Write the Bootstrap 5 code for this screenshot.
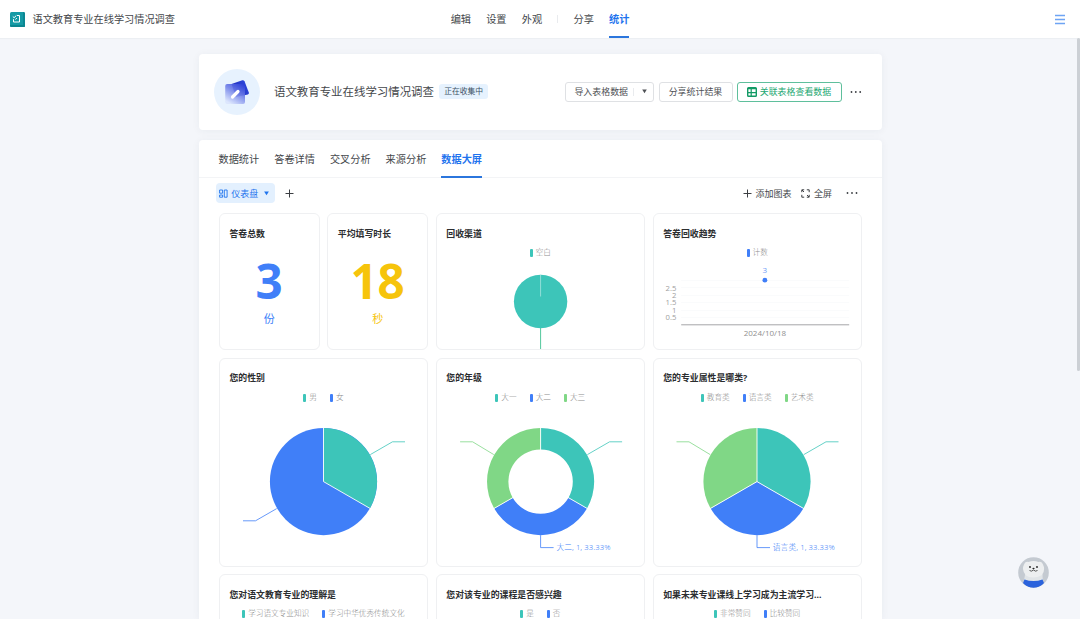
<!DOCTYPE html>
<html lang="zh-CN">
<head>
<meta charset="utf-8">
<meta name="viewport" content="width=device-width, initial-scale=1">
<title>语文教育专业在线学习情况调查</title>
<link href="https://cdn.jsdelivr.net/npm/bootstrap@5.3.0/dist/css/bootstrap.min.css" rel="stylesheet">
<style>
html,body{height:100%}
body{background:#f4f6fa;color:#44474b;font-family:"Noto Sans","Noto Sans CJK SC",sans-serif;font-size:10.18px;line-height:1;overflow:hidden}
svg{display:block;flex:none}
.topbar{height:38.4px;flex:none;padding:0 15px 0 10px;background:#fff;box-shadow:0 1px 1px #eceff3}
.topbar .side{flex:1 1 0}
.tabs{gap:15.2px}
.tab-item{height:100%;display:flex;align-items:center;white-space:nowrap;border-bottom:2px solid transparent;padding-top:2px}
.tab-item.on{color:#1f74ee;font-weight:700;border-color:#2b76dd}
.sep{width:1px;height:8px;background:#e9ebee}
.page-col{padding:15.6px 198px 0 198.5px;overflow:hidden;flex:1 1 0;min-height:0}
.panel{background:#fff;border-radius:4px;box-shadow:0 1px 8px rgba(40,50,70,.055)}
.head{height:76px;flex:none;padding:0 20px 0 15.5px}
.avatar-c{width:46px;height:46px;border-radius:50%;background:#e7f2fe}
.form-name{font-size:11.43px;margin-left:14px;margin-right:5.5px}
.state{font-size:7.8px;background:#e6f2fe;color:#3d5266;border-radius:3px;height:15px;width:48.5px}
.obtn{height:20.6px;border:1px solid #dfe1e4;border-radius:3px;font-size:8.95px;color:#4e5155;white-space:nowrap;display:flex;align-items:center;justify-content:center}
.obtn.green{border-color:#5fbf9c;color:#1da772}
.main-tabs{height:38.4px;flex:none;padding-left:20px;border-bottom:1px solid #f3f4f6;gap:15px}
.main-tabs .tab-item{height:38.4px}
.tools{height:35px;flex:none;padding:0 24px 5px 17.5px;font-size:9px}
.pill{width:59px;height:20px;border-radius:4px;background:#e3f0fe;color:#1f74ee;padding-left:3px;gap:3.2px}
.board{display:grid;grid-template-columns:repeat(6,100.8px);grid-template-rows:136.8px 208.7px 208.7px;gap:7.65px;padding-left:20.3px}
.tile{border:1px solid #eff0f2;border-radius:6px;overflow:hidden;background:#fff;display:flex;flex-direction:column}
.tile.w2{grid-column:span 2}
.tile h2{font-size:8.9px;font-weight:700;line-height:12px;margin:13.5px 0 0 9.6px;color:#2c2e30;white-space:nowrap}
.legend-row{display:flex;justify-content:center;gap:13px;margin-top:7.4px;height:12px;flex:none;font-size:7.65px;color:#8c8c8c;align-items:center;white-space:nowrap}
.legend-row span{display:flex;align-items:center;font-weight:300}
.legend-row i{width:3px;height:8px;border-radius:1px;margin-right:3px;background:#3dc5b9}
.legend-row .b{background:#407ff8}
.legend-row .g{background:#80d786}
.chart{width:208px;margin-left:-.6px;margin-top:.5px}
.chart text{font-size:7.7px;font-weight:300}
.chart .num{font-family:"Open Sans","Noto Sans",sans-serif;font-weight:400}
.big{font-size:47.5px;font-weight:700;line-height:48px;text-align:center;margin-top:17.2px}
.unit{font-size:11px;line-height:14px;text-align:center;margin-top:6.8px}
.scroll-thumb{position:absolute;right:0;top:38px;width:3px;height:333px;background:#ccd0d5;border-radius:2px}
.helper{position:absolute;left:1018px;top:557px}
</style>
</head>
<body class="d-flex flex-column">
<header class="topbar d-flex align-items-center">
  <div class="side d-flex align-items-center">
    <svg width="15" height="15" viewBox="0 0 15 15"><rect width="15" height="15" rx="1.5" fill="#159aa5"/><path d="M13 0h.5A1.500 1.500 0 0 1 15 1.500V13.500A1.500 1.500 0 0 1 13.500 15H13z" fill="#0b8793"/><path d="M0 13h15v.5A1.500 1.500 0 0 1 13.500 15h-12A1.500 1.500 0 0 1 0 13.500z" fill="#0c8690"/><path d="M7 3.500H9.500v6.500H3.500V7.200M2.800 4.500l1.300 1.200 2.200-2.200M5.500 7.500l1.300-1.500" fill="none" stroke="#fff" stroke-width="1"/></svg>
    <span style="margin-left:7.500px">语文教育专业在线学习情况调查</span>
  </div>
  <nav class="tabs d-flex align-items-center h-100" style="margin:0 -2.500px 0 2.500px">
    <span class="tab-item">编辑</span><span class="tab-item">设置</span><span class="tab-item">外观</span>
    <span class="sep"></span>
    <span class="tab-item">分享</span><span class="tab-item on">统计</span>
  </nav>
  <div class="side d-flex justify-content-end">
    <svg width="10" height="11" viewBox="0 0 10 11"><path d="M0 1.500h10M0 5.500h10M0 9.500h10" stroke="#6ea4f4" stroke-width="1.600"/></svg>
  </div>
</header>

<main class="page-col d-flex flex-column">
  <section class="panel head d-flex align-items-center">
    <div class="avatar-c d-flex align-items-center justify-content-center">
      <svg width="26" height="26" viewBox="0 0 26 26">
        <defs><linearGradient id="ga" x1=".9" y1="0" x2=".3" y2="1"><stop offset="0" stop-color="#2b3ed8"/><stop offset=".45" stop-color="#6f7fe8"/><stop offset="1" stop-color="#dbe5fd"/></linearGradient>
        <linearGradient id="gb" x1="1" y1="0" x2="0" y2=".6"><stop offset="0" stop-color="#2a48e2"/><stop offset="1" stop-color="#2731b8"/></linearGradient></defs>
        <path d="M7.500 5l10.800-3.700q1.500-.4 2.200 1l4.300 11.200q.5 1.500-.9 2.100L12 18z" fill="url(#gb)"/>
        <rect x="1.200" y="5" width="19.800" height="20" rx="2" fill="url(#ga)" opacity=".9"/>
        <path d="M8.500 18l5.500-5.500" stroke="#fff" stroke-width="3.200" stroke-linecap="round"/>
      </svg>
    </div>
    <span class="form-name">语文教育专业在线学习情况调查</span>
    <span class="state d-flex align-items-center justify-content-center">正在收集中</span>
    <div class="ms-auto d-flex align-items-center">
      <div class="obtn" style="width:89.500px;padding-left:3px">导入表格数据<span class="sep" style="margin:0 8px 0 5px"></span><svg width="5" height="5" viewBox="0 0 5 5"><path d="M.2.500h4.600L2.500 4.300z" fill="#4e5155"/></svg></div>
      <div class="obtn" style="width:74px;margin-left:4.500px">分享统计结果</div>
      <div class="obtn green" style="width:104.500px;margin-left:4.500px"><svg style="margin-right:2.500px" width="10" height="10" viewBox="0 0 10 10"><rect x=".7" y=".7" width="8.600" height="8.600" rx=".8" fill="none" stroke="#129a65" stroke-width="1.400"/><path d="M.7 1.700h8.600M1 5.600h8M4.200 2v7.500" stroke="#129a65" stroke-width="1.200"/></svg>关联表格查看数据</div>
      <svg style="margin-left:8.500px" width="12" height="4" viewBox="0 0 12 4"><g fill="#3c3f43"><circle cx="1.500" cy="2" r=".9"/><circle cx="5.800" cy="2" r=".9"/><circle cx="10.200" cy="2" r=".9"/></g></svg>
    </div>
  </section>

  <section class="panel d-flex flex-column flex-grow-1 rounded-bottom-0 overflow-hidden" style="margin-top:10px;min-height:0">
    <nav class="main-tabs d-flex">
      <span class="tab-item">数据统计</span><span class="tab-item">答卷详情</span><span class="tab-item">交叉分析</span><span class="tab-item">来源分析</span><span class="tab-item on">数据大屏</span>
    </nav>
    <div class="tools d-flex align-items-center">
      <div class="pill d-flex align-items-center">
        <svg width="9" height="9" viewBox="0 0 9 9"><path d="M.6 1h3v3.200h-3zM.6 6h3v2.200h-3zM5.300 1h2.800v7.200H5.300z" fill="none" stroke="#1f74ee" stroke-width=".9"/></svg>仪表盘<svg style="margin-left:3px" width="5" height="5" viewBox="0 0 5 5"><path d="M.1.500h4.800L2.500 4.300z" fill="#1f74ee"/></svg>
      </div>
      <svg style="margin-left:10px" width="9" height="9" viewBox="0 0 9 9"><path d="M.5 4.500h8M4.500.5v8" stroke="#3c3f43"/></svg>
      <div class="ms-auto d-flex align-items-center">
        <svg width="9" height="9" viewBox="0 0 9 9"><path d="M.5 4.500h8M4.500.5v8" stroke="#3c3f43"/></svg><span style="margin-left:3.500px">添加图表</span>
        <svg style="margin-left:10px" width="9" height="9" viewBox="0 0 9 9"><path d="M.8 3.200V.8h2.400M5.800.8h2.400v2.400M8.200 5.800v2.400H5.800M3.200 8.200H.8V5.800M1 1l2 2M8 8L6 6" fill="none" stroke="#3c3f43" stroke-width="1"/></svg><span style="margin-left:3.500px">全屏</span>
        <svg style="margin-left:14px" width="12" height="4" viewBox="0 0 12 4"><g fill="#3c3f43"><circle cx="1.500" cy="2" r=".9"/><circle cx="6" cy="2" r=".9"/><circle cx="10.500" cy="2" r=".9"/></g></svg>
      </div>
    </div>
    <div class="board">
      <article class="tile"><h2>答卷总数</h2><div class="big" style="color:#407ff8">3</div><div class="unit" style="color:#407ff8">份</div></article>
      <article class="tile"><h2>平均填写时长</h2><div class="big" style="color:#f6c40b">18</div><div class="unit" style="color:#f6c40b">秒</div></article>
      <article class="tile w2"><h2>回收渠道</h2>
        <div class="legend-row"><span><i></i>空白</span></div>
        <svg class="chart" height="91" viewBox="-.5 0 208 91"><circle cx="104.100" cy="41.500" r="26.700" fill="#3dc5b9"/><path d="M104.100 14.500v22" stroke="#b9eae5" stroke-width=".7"/><path d="M104.100 68v23" stroke="#52c79c"/></svg>
      </article>
      <article class="tile w2"><h2>答卷回收趋势</h2>
        <div class="legend-row"><span><i class="b"></i>计数</span></div>
        <svg class="chart" height="91" viewBox="-.2 0 208 91">
          <path d="M28 20.500h168M28 27.500h168M28 35.500h168M28 42.500h168M28 50.500h168M28 57.500h168" stroke="#fafbfc"/>
          <path d="M28 64.800h168" stroke="#a5a6a8"/>
          <circle cx="111.700" cy="20.200" r="2.400" fill="#407ff8"/>
          <text class="num" x="111.700" y="12.500" text-anchor="middle" fill="#6e9bf6" style="font-size:8px">3</text>
          <g fill="#a0a0a0" text-anchor="end"><text class="num" x="23.200" y="30.600">2.5</text><text class="num" x="23.200" y="37.900">2</text><text class="num" x="23.200" y="45.400">1.5</text><text class="num" x="23.200" y="52.900">1</text><text class="num" x="23.200" y="60.300">0.5</text></g>
          <text class="num" x="111.700" y="76.300" text-anchor="middle" fill="#8f8f8f" style="font-size:8px">2024/10/18</text>
        </svg>
      </article>

      <article class="tile w2"><h2>您的性别</h2>
        <div class="legend-row"><span><i></i>男</span><span><i class="b"></i>女</span></div>
        <svg class="chart" height="163" viewBox="-.5 0 208 163"><g transform="translate(104 77.600)">
          <circle r="53.600" fill="#407ff8"/><path d="M0 0V-53.600A53.600 53.600 0 0 1 46.400 26.800z" fill="#3dc5b9"/>
          <path d="M0-54V0L47 27.100" fill="none" stroke="#fff" stroke-width=".9"/>
          <path d="M46.800-27L69-39.800H81.500" fill="none" stroke="#3dc5b9" stroke-width=".8"/><path d="M-46.800 27L-68 39.200H-80.500" fill="none" stroke="#407ff8" stroke-width=".8"/>
        </g></svg>
      </article>
      <article class="tile w2"><h2>您的年级</h2>
        <div class="legend-row"><span><i></i>大一</span><span><i class="b"></i>大二</span><span><i class="g"></i>大三</span></div>
        <svg class="chart" height="163" viewBox="-.5 0 208 163"><g transform="translate(104.100 77.600)">
          <path d="M0-53.600A53.600 53.600 0 0 1 46.400 26.800L27.900 16.100A32.200 32.200 0 0 0 0-32.200z" fill="#3dc5b9"/>
          <path d="M46.400 26.800A53.600 53.600 0 0 1-46.400 26.800L-27.900 16.100A32.200 32.200 0 0 0 27.900 16.100z" fill="#407ff8"/>
          <path d="M-46.400 26.800A53.600 53.600 0 0 1 0-53.600V-32.200A32.200 32.200 0 0 0-27.900 16.100z" fill="#80d786"/>
          <path d="M0-54V-31M27 15.600L47 27.100M-27 15.600L-47 27.100" stroke="#fff" stroke-width=".9"/>
          <path d="M46.800-27L69-39.800H81.500" fill="none" stroke="#3dc5b9" stroke-width=".8"/><path d="M-46.800-27L-68-39.800H-80.500" fill="none" stroke="#80d786" stroke-width=".8"/>
          <path d="M0 53.600V66H13" fill="none" stroke="#407ff8" stroke-width=".8"/><text x="15.800" y="68.600" fill="#407ff8" textLength="54">大二, 1, 33.33%</text>
        </g></svg>
      </article>
      <article class="tile w2"><h2>您的专业属性是哪类?</h2>
        <div class="legend-row"><span><i></i>教育类</span><span><i class="b"></i>语言类</span><span><i class="g"></i>艺术类</span></div>
        <svg class="chart" height="163" viewBox="-.5 0 208 163"><g transform="translate(103.500 77.600)">
          <path d="M0 0V-53.600A53.600 53.600 0 0 1 46.400 26.800z" fill="#3dc5b9"/>
          <path d="M0 0L46.400 26.800A53.600 53.600 0 0 1-46.400 26.800z" fill="#407ff8"/>
          <path d="M0 0L-46.400 26.800A53.600 53.600 0 0 1 0-53.600z" fill="#80d786"/>
          <path d="M0-54V0L47 27.100M0 0L-47 27.100" fill="none" stroke="#fff" stroke-width=".9"/>
          <path d="M46.800-27L69-39.800H81.500" fill="none" stroke="#3dc5b9" stroke-width=".8"/><path d="M-46.800-27L-68-39.800H-80.500" fill="none" stroke="#80d786" stroke-width=".8"/>
          <path d="M0 53.600V66H13" fill="none" stroke="#407ff8" stroke-width=".8"/><text x="15.800" y="68.600" fill="#407ff8" textLength="62">语言类, 1, 33.33%</text>
        </g></svg>
      </article>

      <article class="tile w2"><h2>您对语文教育专业的理解是</h2>
        <div class="legend-row"><span><i></i>学习语文专业知识</span><span><i class="b"></i>学习中华优秀传统文化</span></div></article>
      <article class="tile w2"><h2>您对该专业的课程是否感兴趣</h2>
        <div class="legend-row"><span><i></i>是</span><span><i class="b"></i>否</span></div></article>
      <article class="tile w2"><h2>如果未来专业课线上学习成为主流学习...</h2>
        <div class="legend-row"><span><i></i>非常赞同</span><span><i class="b"></i>比较赞同</span></div></article>
    </div>
  </section>
</main>

<div class="scroll-thumb"></div>
<div class="helper">
  <svg width="31" height="31" viewBox="0 0 31 31">
    <defs><clipPath id="hc"><circle cx="15.500" cy="15.500" r="15.300"/></clipPath></defs>
    <g clip-path="url(#hc)"><rect width="31" height="31" fill="#c4cad1"/>
      <path d="M6 7.500Q7 4 10.500 5q5-1.800 10 0Q24 4 25 7.500q2.500 5-.5 9.500l-.5 6H8l-1-6Q3.500 12 6 7.500z" fill="#edeff0"/>
      <path d="M7 18q8 5 17 0l1.500 8h-20z" fill="#e1e5e8"/>
      <path d="M6.500 22.500q9 3 18 0L26 26q-4 5-10.500 5T5 26z" fill="#2b63dc"/></g>
    <circle cx="12" cy="10" r=".9" fill="#222"/><circle cx="19" cy="10" r=".9" fill="#222"/><ellipse cx="15.500" cy="11.500" rx="1.100" ry=".8" fill="#222"/><path d="M11.500 13.500q2 1.500 4-.5 2 2 4 .5" fill="none" stroke="#333" stroke-width=".8"/>
  </svg>
</div>
<script src="https://cdn.jsdelivr.net/npm/bootstrap@5.3.0/dist/js/bootstrap.bundle.min.js"></script>
</body>
</html>
